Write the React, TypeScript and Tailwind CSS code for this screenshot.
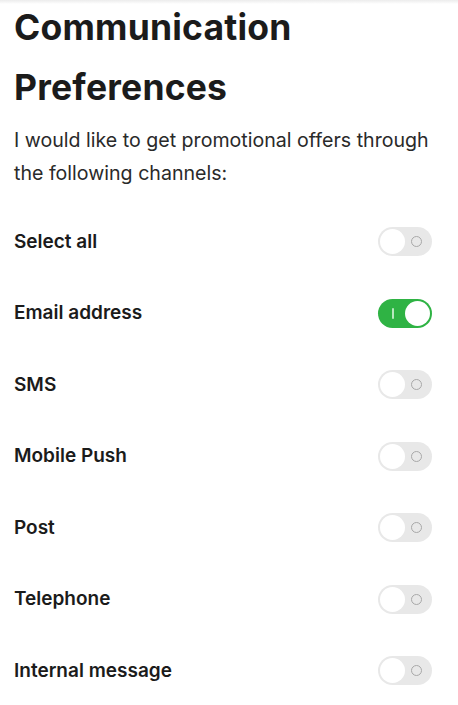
const channels = [
  { label: "Select all", on: false },
  { label: "Email address", on: true },
  { label: "SMS", on: false },
  { label: "Mobile Push", on: false },
  { label: "Post", on: false },
  { label: "Telephone", on: false },
  { label: "Internal message", on: false },
];

const Toggle = ({ on }: { on: boolean }) => {
  if (on) {
    return (
      <div className="flex items-center justify-between w-[54px] h-[29px] rounded-full bg-[#2fb344] p-[2px]">
        <span className="ml-[12px] w-[2px] h-[11px] bg-[#b8e8bf] rounded-full" />
        <span className="w-[25px] h-[25px] rounded-full bg-white" />
      </div>
    );
  }
  return (
    <div className="flex items-center justify-between w-[54px] h-[29px] rounded-full bg-[#e8e8e8] p-[2px]">
      <span className="w-[25px] h-[25px] rounded-full bg-white" />
      <span className="mr-[8px] w-[11px] h-[11px] rounded-full border border-[#a8a8a8]" />
    </div>
  );
};

export default function App() {
  return (
    <div className="min-h-screen bg-white font-['Inter',sans-serif] text-[#1b1b1b]">
      <div className="h-[4px] bg-gradient-to-b from-[#ececec] to-white" />
      <div className="px-[14px]">
        <h1 className="text-[35.5px] font-bold leading-[60px] tracking-[0.2px] -mt-[6px]">
          Communication Preferences
        </h1>
        <p className="mt-[6px] text-[19.6px] leading-[33px] text-[#2a2a2a]">
          I would like to get promotional offers through the following channels:
        </p>
        <div className="mt-[16px] flex flex-col">
          {channels.map((c) => (
            <div key={c.label} className="flex items-center justify-between h-[71.5px] pr-[12px]">
              <span className="text-[19px] font-semibold">{c.label}</span>
              <Toggle on={c.on} />
            </div>
          ))}
        </div>
      </div>
    </div>
  );
}
